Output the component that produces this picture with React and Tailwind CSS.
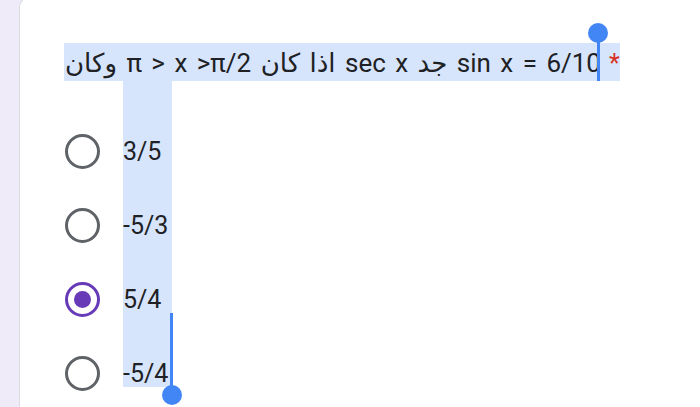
const options = [
    { id: 'a', label: '3/5' },
    { id: 'b', label: '-5/3' },
    { id: 'c', label: '5/4' },
    { id: 'd', label: '-5/4' },
];

function Radio({ checked }) {
    if (checked) {
        return (
            <span className="flex h-[35px] w-[35px] shrink-0 items-center justify-center rounded-full border-[3.5px] border-[#673ab7]">
                <span className="h-[17px] w-[17px] rounded-full bg-[#673ab7]" />
            </span>
        );
    }
    return <span className="h-[35px] w-[35px] shrink-0 rounded-full border-[3.5px] border-[#5f6368]" />;
}

export default function App() {
    const selected = 'c';

    return (
        <div
            className="relative flex h-[407px] w-[700px] overflow-hidden bg-[#f0ebf8] text-[#202124]"
            style={{ fontFamily: "Roboto, 'DejaVu Sans', sans-serif" }}
        >
            <div className="w-[19px] shrink-0" />

            {/* selection highlight over the answers */}
            <div className="absolute left-[123px] top-[81px] z-10 h-[306px] w-[49px] bg-[#d7e5fc]" />

            <div className="-mt-[3px] flex-1 rounded-tl-[10px] border-l border-t border-[#dadce0] bg-white pl-[44px] pt-[45px]">
                {/* question, selected */}
                <div className="flex h-[38px] w-[556px] items-center bg-[#d7e5fc] pl-[1px] pt-[2px] text-[26px] leading-none">
                    <span dir="ltr" className="whitespace-nowrap [word-spacing:3px]">
                        <bdi>وكان</bdi>
                        <span> π &gt; x &gt;π/2 </span>
                        <bdi>اذا كان</bdi>
                        <span> sec x </span>
                        <bdi>جد</bdi>
                        <span> sin x = 6/10</span>
                    </span>
                    <span className="ml-[8px] self-start pt-[6px] text-[25px] text-[#d93025]">*</span>
                </div>

                <div className="mt-[33px] flex flex-col">
                    {options.map(opt => (
                        <label key={opt.id} className="flex h-[74px] items-center gap-[23px] pl-[1px]">
                            <Radio checked={opt.id === selected} />
                            <span className="relative z-20 text-[25px] leading-none">{opt.label}</span>
                        </label>
                    ))}
                </div>
            </div>

            {/* selection handles */}
            <div className="absolute left-[597px] top-[33px] z-30 h-[48px] w-[3px] bg-[#4285f4]" />
            <div className="absolute left-[588px] top-[23px] z-30 h-5 w-5 rounded-full bg-[#4285f4]" />
            <div className="absolute left-[170px] top-[313px] z-30 h-[74px] w-[3px] bg-[#4285f4]" />
            <div className="absolute left-[162px] top-[385px] z-30 h-5 w-5 rounded-full bg-[#4285f4]" />
        </div>
    );
}
